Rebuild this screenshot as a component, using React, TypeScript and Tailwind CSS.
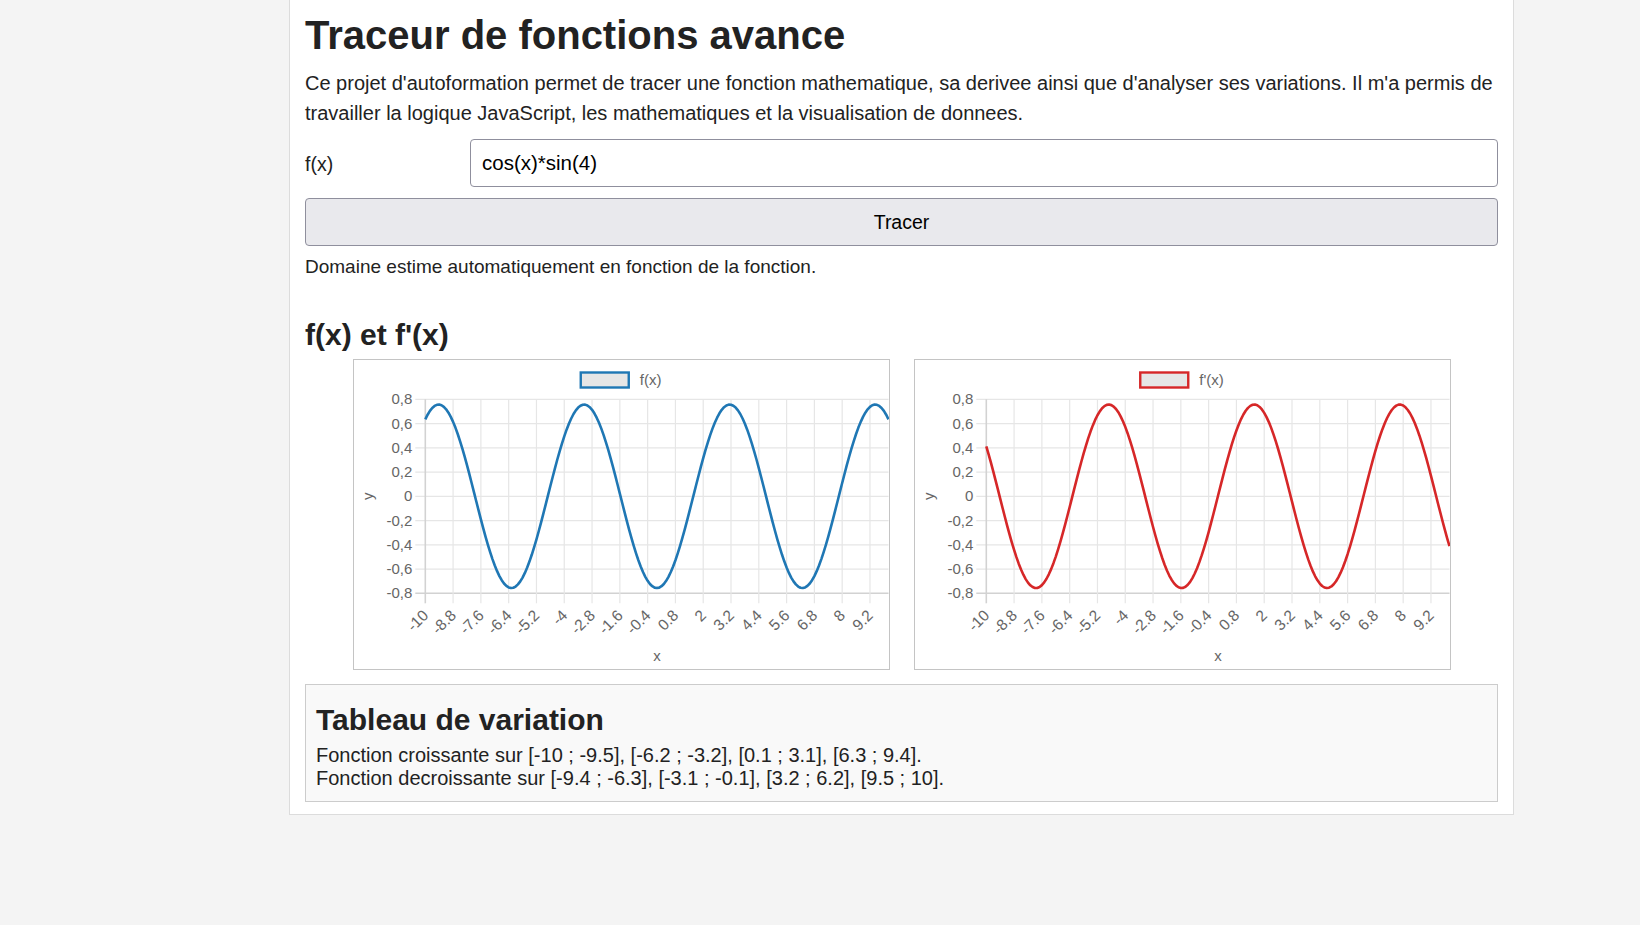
import { useMemo } from 'react'

type ChartProps = {
    label: string
    color: string
    fn: (x: number) => number
}

// plot box inside the chart frame (frame inner size 535 x 309)
const PL = 71.3
const PR = 534.5
const PT = 39.3
const PB = 233.3
const N = 200

const yTicks = [0.8, 0.6, 0.4, 0.2, 0, -0.2, -0.4, -0.6, -0.8]
const xTickIdx = Array.from({ length: 17 }, (_, k) => k * 12)

const px = (i: number) => PL + ((PR - PL) * i) / N
const py = (v: number) => PT + ((0.8 - v) / 1.6) * (PB - PT)

const fmtY = (v: number) => (v === 0 ? '0' : v.toFixed(1).replace('.', ','))
const fmtX = (i: number) => String(Number((-10 + i * 0.1).toFixed(1)))

function Chart({ label, color, fn }: ChartProps) {
    const points = useMemo(
        () =>
            Array.from({ length: N + 1 }, (_, i) => {
                const x = -10 + i * 0.1
                return `${px(i).toFixed(2)},${py(fn(x)).toFixed(2)}`
            }).join(' '),
        [fn],
    )

    // legend is centred: box 48 + gap 12 + text
    const textW = label.length === 4 ? 21.5 : 24.5
    const legendX = 267.5 - (48 + 12 + textW) / 2

    return (
        <div className="w-[537px] h-[311px] border border-[#c4c4c4] bg-white">
            <svg width="535" height="309" viewBox="0 0 535 309" className="block">
                {/* legend */}
                <rect x={legendX} y={12.5} width={48} height={15} fill="#e6e6e6" stroke={color} strokeWidth={2.4} />
                <text x={legendX + 59} y={25} fontSize={15} fill="#666">{label}</text>

                {/* horizontal grid */}
                {yTicks.map((v) => (
                    <g key={v}>
                        <line
                            x1={PL - 10}
                            x2={PR}
                            y1={py(v)}
                            y2={py(v)}
                            stroke={v === -0.8 ? '#d2d2d2' : '#e6e6e6'}
                            strokeWidth={v === -0.8 ? 1.6 : 1.2}
                        />
                        <text x={PL - 13} y={py(v) + 5} fontSize={15} fill="#666" textAnchor="end">{fmtY(v)}</text>
                    </g>
                ))}

                {/* vertical grid + x labels */}
                {xTickIdx.map((i) => (
                    <g key={i}>
                        <line
                            x1={px(i)}
                            x2={px(i)}
                            y1={PT}
                            y2={PB + 10}
                            stroke={i === 0 ? '#d2d2d2' : '#e6e6e6'}
                            strokeWidth={i === 0 ? 1.6 : 1.2}
                        />
                        <text
                            x={px(i) + 4}
                            y={PB + 23}
                            fontSize={15.5}
                            fill="#666"
                            textAnchor="end"
                            transform={`rotate(-45 ${px(i) + 4} ${PB + 23})`}
                        >
                            {fmtX(i)}
                        </text>
                    </g>
                ))}

                {/* axis titles */}
                <text x={(PL + PR) / 2} y={301} fontSize={15} fill="#666" textAnchor="middle">x</text>
                <text
                    x={19}
                    y={(PT + PB) / 2}
                    fontSize={15}
                    fill="#666"
                    textAnchor="middle"
                    transform={`rotate(-90 19 ${(PT + PB) / 2})`}
                >
                    y
                </text>

                <polyline points={points} fill="none" stroke={color} strokeWidth={2.6} strokeLinejoin="round" />
            </svg>
        </div>
    )
}

const S4 = Math.sin(4)
const f = (x: number) => Math.cos(x) * S4
const df = (x: number) => -Math.sin(x) * S4

export default function App() {
    return (
        <div className="min-h-screen bg-[#f4f4f4] font-['Liberation_Sans',Arial,sans-serif] text-[#222]">
            <div className="ml-[289px] w-[1225px] bg-white border-x border-b border-[#dcdcdc] px-[15px] pt-[13px] pb-[12px]">
                <h1 className="text-[40px] leading-[45px] font-bold">Traceur de fonctions avance</h1>
                <p className="mt-[10px] text-[20px] leading-[30px]">
                    Ce projet d'autoformation permet de tracer une fonction mathematique, sa derivee ainsi que d'analyser ses variations. Il m'a permis de travailler la logique JavaScript, les mathematiques et la visualisation de donnees.
                </p>

                <div className="mt-[10px] flex items-center">
                    <label className="w-[165px] text-[19.5px] leading-[48px] pt-[2px]">f(x)</label>
                    <input
                        defaultValue="cos(x)*sin(4)"
                        className="flex-1 h-[48px] px-[11px] text-[20.5px] text-black bg-white border border-[#8f8f9d] rounded-[4px] outline-none"
                    />
                </div>
                <button className="mt-[10px] w-full h-[48px] pt-[2px] bg-[#e9e9ed] border border-[#8f8f9d] rounded-[4px] text-[19.5px] text-black">
                    Tracer
                </button>
                <p className="mt-[6px] text-[19px] leading-[29.5px]">Domaine estime automatiquement en fonction de la fonction.</p>

                <h2 className="mt-[36px] text-[30px] leading-[34px] font-bold">f(x) et f'(x)</h2>
                <div className="mt-[7px] flex justify-center gap-6">
                    <Chart label="f(x)" color="#1f77b4" fn={f} />
                    <Chart label="f'(x)" color="#d62728" fn={df} />
                </div>

                <div className="mt-[14px] bg-[#f9f9f9] border border-[#cccccc] px-[10px] pt-[18px] pb-[11px]">
                    <h3 className="text-[30px] leading-[34px] font-bold">Tableau de variation</h3>
                    <div className="mt-[7px] text-[20px] leading-[23.3px]">
                        <p>Fonction croissante sur [-10 ; -9.5], [-6.2 ; -3.2], [0.1 ; 3.1], [6.3 ; 9.4].</p>
                        <p>Fonction decroissante sur [-9.4 ; -6.3], [-3.1 ; -0.1], [3.2 ; 6.2], [9.5 ; 10].</p>
                    </div>
                </div>
            </div>
        </div>
    )
}
